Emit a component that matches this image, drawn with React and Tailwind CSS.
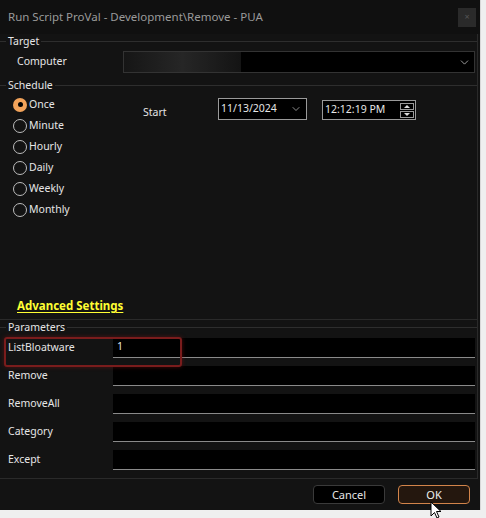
import { ChevronDown } from "lucide-react";

const font = { fontFamily: '"Noto Sans", "Open Sans", sans-serif' };

function GroupHeader({ text }) {
  return (
    <div className="flex items-center h-[14px]">
      <div className="w-[6px] h-px bg-[#2e2e2e]" />
      <span className="px-[2px] text-[10.5px] leading-none text-[#e6e6e6]">{text}</span>
      <div className="flex-1 h-px bg-[#2e2e2e]" />
    </div>
  );
}

function Radio({ label, checked }) {
  return (
    <div className="flex items-center h-[21px] pl-[13px]">
      {checked ? (
        <span className="w-[14px] h-[14px] rounded-full bg-[#f2a35a] flex items-center justify-center">
          <span className="w-[5px] h-[5px] rounded-full bg-black" />
        </span>
      ) : (
        <span className="w-[14px] h-[14px] rounded-full border border-[#bdbdbd]" />
      )}
      <span className="ml-[2px] text-[10.5px] text-[#e6e6e6]">{label}</span>
    </div>
  );
}

function ParamRow({ label, value }) {
  return (
    <div className="flex items-center h-[28px]">
      <span className="w-[113px] pl-[8px] text-[10.5px] text-[#e6e6e6]">{label}</span>
      <div className="flex-1 mr-[2px] h-[20px] bg-black border-b border-[#8a8a8a] text-[10.5px] text-[#e6e6e6] pl-[4px] leading-[16px]">
        {value}
      </div>
    </div>
  );
}

export default function App() {
  return (
    <div className="w-[486px] h-[518px] bg-[#efefef] relative overflow-hidden" style={font}>
      <div className="w-[481px] h-[510px] bg-[#131313] border-r border-[#d8d8d8] flex flex-col">
        {/* title bar */}
        <div className="h-[34px] flex items-center justify-between pl-[8px] pr-[4px] bg-[#101010]">
          <span className="text-[11.5px] text-[#9a9a9a]">
            Run Script ProVal - Development\Remove - PUA
          </span>
          <span className="w-[18px] h-[19px] bg-[#2a2a2a] text-[9px] text-[#555] flex items-center justify-center">
            ×
          </span>
        </div>

        {/* target */}
        <div className="border-r border-[#2a2a2a] mr-[2px] pb-[2px]">
          <GroupHeader text="Target" />
          <div className="flex items-center h-[28px]">
            <span className="w-[123px] pl-[17px] text-[10.5px] text-[#e6e6e6]">Computer</span>
            <div className="flex-1 mr-[2px] h-[22px] bg-black border border-[#333] flex items-center justify-end relative">
              <div className="absolute left-0 top-0 h-full w-[117px] bg-gradient-to-r from-[#161616] via-[#262626] to-[#141414]" />
              <ChevronDown size={13} className="text-[#bbb] mr-[3px]" strokeWidth={1.5} />
            </div>
          </div>
        </div>

        {/* schedule */}
        <div className="h-[242px] border-r border-b border-[#2a2a2a] mr-[2px] flex flex-col">
          <GroupHeader text="Schedule" />
          <div className="flex mt-[2px]">
            <div className="w-[143px]">
              <Radio label="Once" checked />
              <Radio label="Minute" />
              <Radio label="Hourly" />
              <Radio label="Daily" />
              <Radio label="Weekly" />
              <Radio label="Monthly" />
            </div>
            <div className="flex items-start">
              <span className="mt-[11px] w-[75px] text-[10.5px] text-[#e6e6e6]">Start</span>
              <div className="mt-[4px] w-[89px] h-[22px] border border-[#9a9a9a] bg-black flex items-center justify-between pl-[2px] pr-[4px]">
                <span className="text-[10.5px] text-[#e6e6e6]">11/13/2024</span>
                <ChevronDown size={12} className="text-[#bbb]" strokeWidth={1.5} />
              </div>
              <div className="ml-[15px] w-[94px] h-[20px] mt-[6px] border border-[#9a9a9a] bg-black flex items-center justify-between pl-[2px] pr-[1px]">
                <span className="text-[10.5px] text-[#e6e6e6]">12:12:19 PM</span>
                <div className="flex flex-col gap-px">
                  <span className="w-[14px] h-[7px] border border-[#9a9a9a] flex items-center justify-center">
                    <svg width="6" height="3" viewBox="0 0 6 3"><path d="M0 3 L3 0 L6 3 Z" fill="#ddd" /></svg>
                  </span>
                  <span className="w-[14px] h-[7px] border border-[#9a9a9a] flex items-center justify-center">
                    <svg width="6" height="3" viewBox="0 0 6 3"><path d="M0 0 L3 3 L6 0 Z" fill="#ddd" /></svg>
                  </span>
                </div>
              </div>
            </div>
          </div>
          <div className="mt-auto mb-[7px] pl-[17px] leading-none">
            <span className="text-[11.5px] font-bold text-[#ffff33] underline underline-offset-2">
              Advanced Settings
            </span>
          </div>
        </div>

        {/* parameters */}
        <div className="border-r border-b border-[#2a2a2a] mr-[2px] relative pb-[4px]">
          <GroupHeader text="Parameters" />
          <div>
            <ParamRow label="ListBloatware" value="1" />
            <ParamRow label="Remove" />
            <ParamRow label="RemoveAll" />
            <ParamRow label="Category" />
            <ParamRow label="Except" />
          </div>
          <div className="absolute left-[4px] top-[17px] w-[178px] h-[30px] rounded-[3px] border-2 border-[#7a1c1c] shadow-[0_0_4px_rgba(120,20,20,0.6)]" />
        </div>

        {/* footer */}
        <div className="flex-1 flex items-center justify-end gap-[13px] pr-[10px]">
          <button className="w-[72px] h-[19px] rounded-[4px] border border-[#3a3a3a] bg-black text-[11px] text-[#e6e6e6] leading-none">
            Cancel
          </button>
          <button className="w-[72px] h-[19px] rounded-[4px] border border-[#d2844a] bg-[#24170e] text-[11px] text-[#f0f0f0] leading-none">
            OK
          </button>
        </div>
      </div>

      {/* mouse pointer */}
      <svg className="absolute left-[430px] top-[501px]" width="12" height="18" viewBox="0 0 12 18">
        <path d="M1 1 L1 15 L4.5 11.5 L7 17 L9 16 L6.5 10.5 L11 10.5 Z" fill="#fff" stroke="#000" strokeWidth="1" />
      </svg>
    </div>
  );
}
